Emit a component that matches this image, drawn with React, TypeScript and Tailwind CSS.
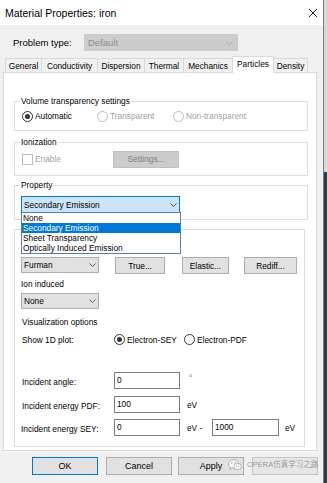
import React from "react";

function Chevron({ color = "#555555" }: { color?: string }) {
  return (
    <svg width="7" height="4" viewBox="0 0 7 4" className="shrink-0">
      <path d="M0.5 0.5L3.5 3.5L6.5 0.5" fill="none" stroke={color} strokeWidth="1" />
    </svg>
  );
}

function Radio({ label, checked, disabled }: { label: string; checked?: boolean; disabled?: boolean }) {
  return (
    <span className="flex items-center">
      <span
        className={
          disabled
            ? "flex h-[11px] w-[11px] shrink-0 items-center justify-center rounded-full border border-[#bcbcbc] bg-white"
            : "flex h-[11px] w-[11px] shrink-0 items-center justify-center rounded-full border border-[#333333] bg-white"
        }
      >
        {checked && <span className="h-[5px] w-[5px] rounded-full bg-[#333333]" />}
      </span>
      <span className={disabled ? "ml-[2px] text-[#a0a0a0]" : "ml-[2px]"}>{label}</span>
    </span>
  );
}

function Group({ label, className, children }: { label?: string; className: string; children?: React.ReactNode }) {
  return (
    <div className={"relative ml-[10px] border border-[#dcdcdc] " + className}>
      {label && <span className="absolute left-[5px] top-[-6px] bg-white px-[1px] leading-[10px]">{label}</span>}
      {children}
    </div>
  );
}

function Combo({ value, className }: { value: string; className: string }) {
  return (
    <div className={"flex items-center justify-between border border-[#adadad] bg-[#e1e1e1] pl-[2px] pr-[2px] " + className}>
      <span>{value}</span>
      <Chevron color="#5a5a5a" />
    </div>
  );
}

function Btn({ label, className }: { label: string; className: string }) {
  return (
    <div className={"flex h-[17px] items-center justify-center border border-[#adadad] bg-[#e1e1e1] " + className}>
      {label}
    </div>
  );
}

function Field({ value, className }: { value: string; className: string }) {
  return (
    <div className={"flex h-[17px] items-center border border-[#7a7a7a] bg-white pb-[2px] pl-[2px] " + className}>
      {value}
    </div>
  );
}

const tabs = [
  { name: "General", w: "w-[37px]" },
  { name: "Conductivity", w: "w-[57px]" },
  { name: "Dispersion", w: "w-[48px]" },
  { name: "Thermal", w: "w-[40px]" },
  { name: "Mechanics", w: "w-[50px]" },
  { name: "Particles", w: "w-[42px]", active: true },
  { name: "Density", w: "w-[35px]" },
];

const propertyOptions = ["None", "Secondary Emission", "Sheet Transparency", "Optically Induced Emission"];

export default function App() {
  return (
    <div className="flex h-[483px] w-[327px] overflow-hidden font-['Liberation_Sans','Noto_Sans_CJK_SC',sans-serif] text-[8.3px] leading-[10px] text-black">
      <div className="relative flex w-[324px] shrink-0 flex-col border-r border-[#7a7a7a] bg-[#f0f0f0]">
        {/* Title bar */}
        <div className="flex h-[25px] shrink-0 items-center justify-between bg-white pl-[5px] pr-[5px]">
          <span className="text-[10.5px] leading-[12px]">Material Properties: iron</span>
          <svg width="10" height="10" viewBox="0 0 10 10">
            <path d="M1 1L9 9M9 1L1 9" stroke="#222222" strokeWidth="1" />
          </svg>
        </div>

        {/* Problem type */}
        <div className="mt-[9px] flex h-[17px] shrink-0 items-center pl-[13px] text-[9.5px] leading-[12px]">
          <span className="w-[71px]">Problem type:</span>
          <div className="flex h-[17px] w-[154px] items-center justify-between border border-[#cccccc] bg-[#cccccc] pl-[3px] pr-[4px] text-[#8d8d8d]">
            <span>Default</span>
            <Chevron color="#a8a8a8" />
          </div>
        </div>

        {/* Tabs */}
        <div className="mt-[5px] flex h-[16px] shrink-0 items-end pl-[5px]">
          {tabs.map((t, i) =>
            t.active ? (
              <div
                key={t.name}
                className={"relative z-10 -ml-px mb-[-1px] flex h-[17px] items-start justify-center border border-b-0 border-[#d9d9d9] bg-white pt-[2px] " + t.w}
              >
                {t.name}
              </div>
            ) : (
              <div
                key={t.name}
                className={
                  (i === 0 ? "" : "-ml-px ") +
                  "flex h-[14px] items-center justify-center border border-b-0 border-[#d9d9d9] bg-[#f0f0f0] " +
                  t.w
                }
              >
                {t.name}
              </div>
            )
          )}
        </div>

        {/* Tab panel */}
        <div className="ml-[3px] flex h-[379px] w-[314px] shrink-0 flex-col border border-[#d9d9d9] bg-white">
          <Group label="Volume transparency settings" className="mt-[28px] flex h-[30px] w-[294px] items-center pl-[7px]">
            <div className="w-[75px]">
              <Radio label="Automatic" checked />
            </div>
            <div className="w-[76px]">
              <Radio label="Transparent" disabled />
            </div>
            <Radio label="Non-transparent" disabled />
          </Group>

          <Group label="Ionization" className="mt-[11px] flex h-[34px] w-[294px] items-center pl-[7px]">
            <div className="flex w-[91px] items-center">
              <span className="h-[11px] w-[11px] border border-[#bcbcbc] bg-white" />
              <span className="ml-[2px] text-[#a0a0a0]">Enable</span>
            </div>
            <div className="flex h-[17px] w-[66px] items-center justify-center border border-[#bfbfbf] bg-[#cccccc] text-[#838383]">
              Settings...
            </div>
          </Group>

          <Group label="Property" className="z-20 mt-[9px] h-[35px] w-[294px] pl-[6px] pt-[10px]">
            <div className="relative w-[159px]">
              <div className="flex h-[17px] items-center justify-between border border-[#0078d7] bg-[#cce4f7] pl-[2px] pr-[2px]">
                <span>Secondary Emission</span>
                <Chevron color="#4a4a4a" />
              </div>
              <div className="absolute left-0 top-[16px] w-[160px] border border-[#4f7fb5] bg-white">
                {propertyOptions.map((o) => (
                  <div
                    key={o}
                    className={o === "Secondary Emission" ? "h-[10px] bg-[#0078d7] pl-[1px] text-white" : "h-[10px] pl-[1px]"}
                  >
                    {o}
                  </div>
                ))}
              </div>
            </div>
          </Group>

          <Group className="mt-[9px] flex h-[218px] w-[291px] flex-col pl-[6px]">
            <div className="mt-[27px] flex h-[17px] items-start">
              <Combo value="Furman" className="h-[16px] w-[78px]" />
              <Btn label="True..." className="ml-[16px] w-[50px]" />
              <Btn label="Elastic..." className="ml-[17px] w-[47px]" />
              <Btn label="Rediff..." className="ml-[15px] w-[53px]" />
            </div>
            <div className="mt-[5px] h-[10px]">Ion induced</div>
            <Combo value="None" className="mt-[4px] h-[16px] w-[78px]" />
            <div className="mt-[8px] h-[10px] pl-[1px]">Visualization options</div>
            <div className="mt-[7px] flex h-[11px] items-center pl-[1px]">
              <span className="w-[92px]">Show 1D plot:</span>
              <div className="w-[70px]">
                <Radio label="Electron-SEY" checked />
              </div>
              <Radio label="Electron-PDF" />
            </div>

            <div className="mt-[27px] flex h-[17px] items-center">
              <span className="w-[93px] pl-[1px] pt-[2px]">Incident angle:</span>
              <Field value="0" className="w-[66px]" />
              <span className="ml-[9px] self-start pt-[1px] text-[#666666]">°</span>
            </div>
            <div className="mt-[7px] flex h-[17px] items-center">
              <span className="w-[93px] pl-[1px] pt-[2px]">Incident energy PDF:</span>
              <Field value="100" className="w-[66px]" />
              <span className="ml-[7px]">eV</span>
            </div>
            <div className="mt-[6px] flex h-[17px] items-center">
              <span className="w-[93px] pt-[2px]">Incident energy SEY:</span>
              <Field value="0" className="w-[66px]" />
              <span className="ml-[7px] w-[25px]">eV -</span>
              <Field value="1000" className="w-[67px]" />
              <span className="ml-[6px]">eV</span>
            </div>
          </Group>
        </div>

        {/* Dialog buttons */}
        <div className="mt-[6px] flex h-[18px] shrink-0 items-center text-[9px]">
          <div className="ml-[32px] flex h-[18px] w-[66px] items-center justify-center border border-[#0078d7] bg-[#e1e1e1]">OK</div>
          <div className="ml-[8px] flex h-[18px] w-[66px] items-center justify-center border border-[#adadad] bg-[#e1e1e1]">Cancel</div>
          <div className="ml-[6px] flex h-[18px] w-[66px] items-center justify-center border border-[#adadad] bg-[#e1e1e1]">Apply</div>
          <div className="ml-[8px] flex h-[18px] w-[66px] items-center justify-center border border-[#c4c4c4] bg-[#e6e6e6]" />
        </div>

        {/* Watermark overlay */}
        <div className="absolute left-[228px] top-[459px] flex items-center opacity-90">
          <svg width="14" height="12" viewBox="0 0 14 12">
            <ellipse cx="5.5" cy="5" rx="5" ry="4.2" fill="#ffffff" stroke="#9a9a9a" strokeWidth="0.8" />
            <path d="M2.5 8.2L2 10.5L4.6 9" fill="#ffffff" stroke="#9a9a9a" strokeWidth="0.8" />
            <circle cx="3.8" cy="4" r="0.7" fill="#9a9a9a" />
            <circle cx="7" cy="4" r="0.7" fill="#9a9a9a" />
            <ellipse cx="9.6" cy="7.6" rx="3.8" ry="3.2" fill="#ffffff" stroke="#9a9a9a" strokeWidth="0.8" />
            <circle cx="8.4" cy="7" r="0.6" fill="#9a9a9a" />
            <circle cx="10.8" cy="7" r="0.6" fill="#9a9a9a" />
          </svg>
          <span className="ml-[5px] text-[7.5px] leading-[10px] text-[#8a8a8a] [text-shadow:0_0_1px_#ffffff]">
            OPERA仿真学习之路
          </span>
        </div>
      </div>

      {/* Desktop behind the dialog */}
      <div className="flex w-[3px] flex-col">
        <div className="h-[172px] bg-[#d8d8d8]" />
        <div className="flex-1 bg-[#2c3a4a]" />
      </div>
    </div>
  );
}
